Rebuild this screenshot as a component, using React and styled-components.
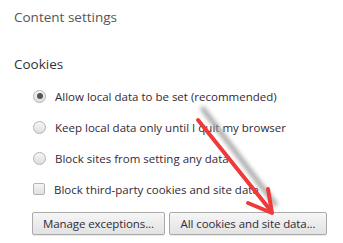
import * as React from 'react';
import styled, { createGlobalStyle } from 'styled-components';

const Global = createGlobalStyle`
  html, body { margin: 0; padding: 0; background: #fff; }
  body { font-family: 'Open Sans', 'Noto Sans', sans-serif; }
`;

const options = [
  { kind: 'radio', checked: true, label: 'Allow local data to be set (recommended)' },
  { kind: 'radio', label: 'Keep local data only until I quit my browser' },
  { kind: 'radio', label: 'Block sites from setting any data' },
  { kind: 'check', label: 'Block third-party cookies and site data' },
];

const App = () => (
  <>
    <Global />
    <Page>
      <Header>Content settings</Header>
      <Section>
        <SectionTitle>Cookies</SectionTitle>
        <List>
          {options.map((o) => (
            <Option key={o.label}>
              {o.kind === 'radio' ? <Radio $checked={o.checked} /> : <Check />}
              <Label>{o.label}</Label>
            </Option>
          ))}
        </List>
        <Buttons>
          <Button $width={133}>Manage exceptions...</Button>
          <Button $width={158}>All cookies and site data...</Button>
        </Buttons>
      </Section>
      <Arrow width="343" height="243" viewBox="0 0 343 243">
        <defs>
          <filter id="blur" x="-50%" y="-50%" width="200%" height="200%">
            <feGaussianBlur stdDeviation="2.2" />
          </filter>
        </defs>
        <g filter="url(#blur)" stroke="#9a9a9a" strokeWidth="5" fill="none" strokeLinecap="round" opacity="0.85">
          <line x1="203" y1="109" x2="275" y2="204" />
        </g>
        <g stroke="#f0393b" strokeWidth="4" fill="none" strokeLinecap="round" strokeLinejoin="round">
          <line x1="198" y1="120" x2="271" y2="211" />
          <polyline points="248,203 272,213 268,189" />
        </g>
      </Arrow>
    </Page>
  </>
);

const Page = styled.div`
  position: relative;
  width: 343px;
  height: 243px;
  overflow: hidden;
  padding: 8px 0 0 14px;
  box-sizing: border-box;
`;

const Header = styled.div`
  font-size: 13.5px;
  color: #555;
  line-height: 18px;
`;

const Section = styled.div`
  margin-top: 29px;
`;

const SectionTitle = styled.div`
  font-size: 13.5px;
  color: #333;
  line-height: 18px;
`;

const List = styled.div`
  display: flex;
  flex-direction: column;
  gap: 13px;
  margin-top: 14px;
  padding-left: 19px;
`;

const Option = styled.div`
  display: flex;
  align-items: center;
  height: 18px;
`;

const Radio = styled.span`
  width: 13px;
  height: 13px;
  border-radius: 50%;
  box-sizing: border-box;
  border: 1px solid #b3b3b3;
  background: linear-gradient(#f6f6f6, #dedede);
  margin-right: 9px;
  position: relative;
  flex: none;
  &::after {
    content: '';
    display: ${(p) => (p.$checked ? 'block' : 'none')};
    position: absolute;
    left: 2.5px;
    top: 2.5px;
    width: 6px;
    height: 6px;
    border-radius: 50%;
    background: #555;
  }
`;

const Check = styled.span`
  width: 12px;
  height: 12px;
  box-sizing: border-box;
  border: 1px solid #b3b3b3;
  border-radius: 2px;
  background: linear-gradient(#f6f6f6, #e0e0e0);
  margin-right: 9px;
  flex: none;
`;

const Label = styled.span`
  font-size: 11.5px;
  color: #322a36;
  white-space: nowrap;
`;

const Buttons = styled.div`
  display: flex;
  gap: 4px;
  margin-top: 14px;
  padding-left: 18px;
`;

const Button = styled.button`
  width: ${(p) => p.$width}px;
  height: 23px;
  padding: 0;
  font-family: inherit;
  font-size: 11.5px;
  letter-spacing: -0.1px;
  white-space: nowrap;
  color: #322a36;
  border: 1px solid #aaa;
  border-radius: 2px;
  background: linear-gradient(#f6f6f6, #e2e2e2);
  box-shadow: 0 1px 0 rgba(0, 0, 0, 0.08);
`;

const Arrow = styled.svg`
  position: absolute;
  left: 0;
  top: 0;
  pointer-events: none;
`;

export default App;
